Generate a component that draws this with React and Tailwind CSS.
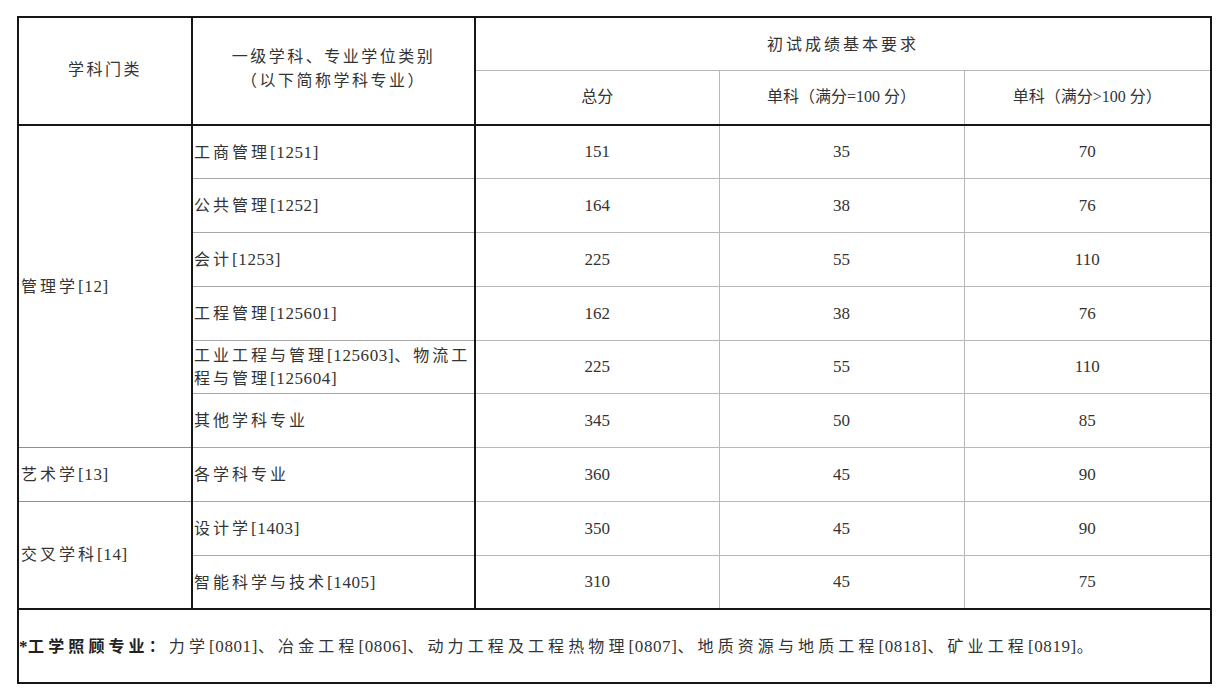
const Mixed = ({ text }) =>
  text.split(/([\x00-\x7F]+)/).map((s, i) =>
    /^[\x00-\x7F]+$/.test(s) ? (
      <span key={i} className="tracking-[0.6px] text-[17px]">{s}</span>
    ) : (
      s
    )
  );

const rows = [
  { group: '管理学[12]', span: 6, name: '工商管理[1251]', total: 151, a: 35, b: 70 },
  { name: '公共管理[1252]', total: 164, a: 38, b: 76 },
  { name: '会计[1253]', total: 225, a: 55, b: 110 },
  { name: '工程管理[125601]', total: 162, a: 38, b: 76 },
  { name: ['工业工程与管理[125603]、物流工', '程与管理[125604]'], total: 225, a: 55, b: 110 },
  { name: '其他学科专业', total: 345, a: 50, b: 85 },
  { group: '艺术学[13]', span: 1, name: '各学科专业', total: 360, a: 45, b: 90 },
  { group: '交叉学科[14]', span: 2, name: '设计学[1403]', total: 350, a: 45, b: 90 },
  { name: '智能科学与技术[1405]', total: 310, a: 45, b: 75 },
];

export default function App() {
  return (
    <div className="w-[1223px] h-[696px] bg-white pt-[16px] pl-[17px] text-[#333] font-['Liberation_Serif','Noto_Sans_CJK_SC',serif]">
      <table className="table-fixed border-collapse border-2 border-[#161616] w-[1193px]">
        <colgroup>
          <col className="w-[174px]" />
          <col className="w-[283px]" />
          <col className="w-[244px]" />
          <col className="w-[245px]" />
          <col className="w-[247px]" />
        </colgroup>
        <thead>
          <tr className="h-[53px]">
            <td rowSpan={2} className="border-2 border-[#161616] text-center text-[16px] tracking-[2.5px] align-middle pb-[2px]">
              学科门类
            </td>
            <td rowSpan={2} className="border-2 border-[#161616] text-center text-[16px] tracking-[2.5px] leading-[24px] align-middle pb-[4px]">
              一级学科、专业学位类别
              <br />
              （以下简称学科专业）
            </td>
            <td colSpan={3} className="border-2 border-b border-[#161616] border-b-[#b8b8b8] text-center text-[16px] tracking-[3px] pt-[2px]">
              初试成绩基本要求
            </td>
          </tr>
          <tr className="h-[55px]">
            <td className="border-b-2 border-b-[#161616] border-r border-r-[#b8b8b8] text-center text-[16px]">总分</td>
            <td className="border-b-2 border-b-[#161616] border-r border-r-[#b8b8b8] text-center text-[16px]">单科（满分=100 分）</td>
            <td className="border-b-2 border-b-[#161616] border-r-2 border-r-[#161616] text-center text-[16px]">单科（满分&gt;100 分）</td>
          </tr>
        </thead>
        <tbody>
          {rows.map((r, i) => (
            <tr key={i} className="h-[53.8px]">
              {r.group && (
                <td rowSpan={r.span} className="border-x-2 border-x-[#161616] border-b border-b-[#8f8f8f] text-left pl-[2px] text-[16px] tracking-[3px] align-middle">
                  <Mixed text={r.group} />
                </td>
              )}
              <td className="border-x-2 border-x-[#161616] border-b border-b-[#a8a8a8] text-left pl-[1px] text-[16px] tracking-[3px] leading-[23px] align-middle whitespace-nowrap">
                {Array.isArray(r.name) ? (
                  <>
                    <Mixed text={r.name[0]} />
                    <br />
                    <Mixed text={r.name[1]} />
                  </>
                ) : (
                  <Mixed text={r.name} />
                )}
              </td>
              <td className="border-r border-r-[#b8b8b8] border-b border-b-[#b8b8b8] text-center text-[17px]">{r.total}</td>
              <td className="border-r border-r-[#b8b8b8] border-b border-b-[#b8b8b8] text-center text-[17px]">{r.a}</td>
              <td className="border-r-2 border-r-[#161616] border-b border-b-[#b8b8b8] text-center text-[17px]">{r.b}</td>
            </tr>
          ))}
          <tr className="h-[74px]">
            <td colSpan={5} className="border-2 border-[#161616] text-left text-[16px] tracking-[4.1px] pl-0 pt-[2px]">
              <span className="font-bold text-[#222]">
                <Mixed text="*工学照顾专业：" />
              </span>
              <Mixed text="力学[0801]、冶金工程[0806]、动力工程及工程热物理[0807]、地质资源与地质工程[0818]、矿业工程[0819]。" />
            </td>
          </tr>
        </tbody>
      </table>
    </div>
  );
}
